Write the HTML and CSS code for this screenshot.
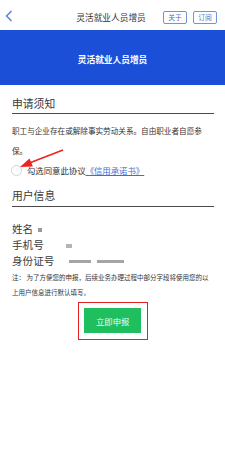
FILE: index.html
```html
<!DOCTYPE html>
<html lang="zh-CN">
<head>
<meta charset="utf-8">
<title>灵活就业人员增员</title>
<link rel="stylesheet" href="styles.css">
</head>
<body>
<div class="page">
  <header class="nav">
    <div class="nav-left">
      <svg class="back" width="8" height="12" viewBox="0 0 8 12"><path d="M6.5 1 L1.5 6 L6.5 11" fill="none" stroke="#4a7bd4" stroke-width="1.3"/></svg>
    </div>
    <div class="nav-title">灵活就业人员增员</div>
    <div class="nav-right">
      <span class="nav-btn">关于</span>
      <span class="nav-btn">订阅</span>
    </div>
  </header>
  <div class="banner">灵活就业人员增员</div>
  <main class="content">
    <h2 class="sec-title">申请须知</h2>
    <p class="notice">职工与企业存在或解除事实劳动关系。自由职业者自愿参保。</p>
    <div class="agree">
      <span class="radio"></span>
      <span class="agree-text">勾选同意此协议<a class="link">《信用承诺书》</a></span>
    </div>
    <h2 class="sec-title sec-user">用户信息</h2>
    <div class="info-row"><span class="label">姓名</span><span class="mask m-name"></span></div>
    <div class="info-row"><span class="label">手机号</span><span class="mask m-phone"></span></div>
    <div class="info-row"><span class="label">身份证号</span><span class="mask m-id1"></span><span class="mask m-id2"></span></div>
    <p class="note">注：&nbsp;为了方便您的申报，后续业务办理过程中部分字段将使用您的以上用户信息进行默认填写。</p>
    <div class="btn-wrap">
      <div class="highlight"><button class="submit">立即申报</button></div>
    </div>
  </main>
  <svg class="arrow" width="70" height="35" viewBox="0 0 70 35">
    <path d="M63 10 L30 22.8" stroke="#ee2222" stroke-width="1.6" fill="none"/>
    <path d="M20 27 L29.5 18.6 L32.9 26.4 Z" fill="#ee2222"/>
  </svg>
</div>
</body>
</html>
```
FILE: styles.css
```css
* { box-sizing: border-box; }
html, body { margin: 0; padding: 0; background: #fff; }
body {
  font-family: "Noto Sans CJK SC", "Noto Sans", sans-serif;
  color: #333;
}
.page { position: relative; width: 225px; min-height: 463px; background: #fff; }
.nav {
  height: 30px;
  display: grid;
  grid-template-columns: 1fr auto 1fr;
  align-items: center;
  padding: 0 8px 0 5px;
  background: #fff;
}
.nav-left { display: flex; align-items: center; }
.back { display: block; margin-top: 1px; }
.nav-title { font-size: 8.7px; color: #333; line-height: 12px; margin-top: 5px; }
.nav-right { display: flex; justify-content: flex-end; gap: 6px; margin-top: 5px; }
.nav-btn {
  width: 24px; height: 13px;
  border: 1px solid #6f95d8;
  border-radius: 2px;
  font-size: 6.8px; line-height: 11px;
  color: #4a74c9;
  text-align: center;
}
.banner {
  height: 55px;
  background: #1b4fd8;
  color: #fff;
  font-size: 8.7px;
  font-weight: bold;
  display: flex; align-items: center; justify-content: center;
  padding-top: 4px;
}
.content { padding: 0 11px 0 12px; }
.sec-title {
  margin: 0;
  padding-top: 10px;
  padding-bottom: 2px;
  font-size: 10.8px;
  font-weight: normal;
  line-height: 16px;
  color: #3a3a3a;
  border-bottom: 1px solid #4a4a4a;
}
.notice {
  margin: 7px 0 0;
  width: 196px;
  font-size: 7.6px;
  line-height: 20px;
  color: #333;
}
.agree {
  display: flex; align-items: center;
  height: 14px;
  margin-top: 2px;
}
.radio {
  width: 11px; height: 11px;
  border: 1px solid #d4d4d4;
  border-radius: 50%;
  margin-left: -1px;
  flex: none;
}
.agree-text { margin-left: 5px; font-size: 8.4px; color: #333; line-height: 12px; }
.link { color: #3d6fd3; text-decoration: underline; }
.sec-user { padding-top: 10px; padding-bottom: 3px; }
.info-row {
  display: flex; align-items: center;
  height: 16px;
  font-size: 10.6px;
  color: #3a3a3a;
}
.sec-user + .info-row { margin-top: 14px; }
.label { line-height: 16px; }
.mask { display: inline-block; background: #9a9a9a; height: 4px; }
.m-name { width: 4px; margin-left: 5px; margin-top: 2px; }
.m-phone { width: 6px; margin-left: 22px; margin-top: 1px; background: #b5b5b5; }
.m-id1 { width: 22px; margin-left: 15px; background: #a5a5a5; height: 3px; }
.m-id2 { width: 27px; margin-left: 6px; background: #a5a5a5; height: 3px; }
.note {
  margin: 0;
  padding-top: 1px;
  font-size: 6.5px;
  line-height: 15px;
  color: #333;
}
.btn-wrap { display: flex; justify-content: center; margin-top: 2px; }
.highlight {
  border: 1.5px solid #e52222;
  padding: 5px 6px 5.5px 5.5px;
}
.submit {
  display: block;
  width: 57px; height: 25px;
  border: none;
  background: #1fbe5f;
  color: #eafff0;
  font-family: "Noto Sans CJK SC", sans-serif;
  font-size: 8.4px;
  padding: 0;
}
.arrow { position: absolute; left: 0; top: 140px; }
```
